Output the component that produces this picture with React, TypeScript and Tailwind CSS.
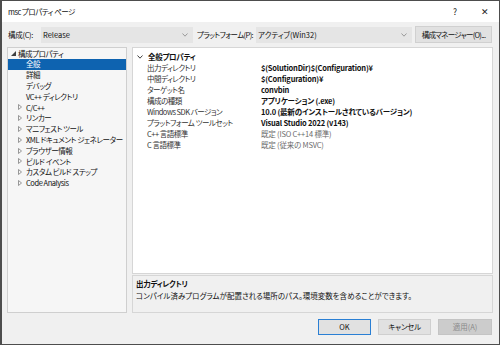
import React from 'react';

type TreeItem = { label: string; level: number; state?: 'open' | 'closed'; selected?: boolean };

const treeItems: TreeItem[] = [
    { label: '構成プロパティ', level: 0, state: 'open' },
    { label: '全般', level: 1, selected: true },
    { label: '詳細', level: 1 },
    { label: 'デバッグ', level: 1 },
    { label: 'VC++ ディレクトリ', level: 1 },
    { label: 'C/C++', level: 1, state: 'closed' },
    { label: 'リンカー', level: 1, state: 'closed' },
    { label: 'マニフェスト ツール', level: 1, state: 'closed' },
    { label: 'XML ドキュメント ジェネレーター', level: 1, state: 'closed' },
    { label: 'ブラウザー情報', level: 1, state: 'closed' },
    { label: 'ビルド イベント', level: 1, state: 'closed' },
    { label: 'カスタム ビルド ステップ', level: 1, state: 'closed' },
    { label: 'Code Analysis', level: 1, state: 'closed' },
];

const props = [
    { name: '出力ディレクトリ', value: '$(SolutionDir)$(Configuration)¥', bold: true },
    { name: '中間ディレクトリ', value: '$(Configuration)¥', bold: true },
    { name: 'ターゲット名', value: 'convbin', bold: true },
    { name: '構成の種類', value: 'アプリケーション (.exe)', bold: true },
    { name: 'Windows SDK バージョン', value: '10.0 (最新のインストールされているバージョン)', bold: true },
    { name: 'プラットフォーム ツールセット', value: 'Visual Studio 2022 (v143)', bold: true },
    { name: 'C++ 言語標準', value: '既定 (ISO C++14 標準)', bold: false },
    { name: 'C 言語標準', value: '既定 (従来の MSVC)', bold: false },
];

/* tiny tree arrows */
const OpenArrow = () => (
    <svg width="5" height="5" viewBox="0 0 5 5" className="shrink-0">
        <path d="M5 0 L5 5 L0 5 Z" fill="#404040" />
    </svg>
);
const ClosedArrow = () => (
    <svg width="4" height="6" viewBox="0 0 4 6" className="shrink-0">
        <path d="M0.5 0.5 L3.5 3 L0.5 5.5 Z" fill="none" stroke="#808080" strokeWidth="0.8" />
    </svg>
);
const Chevron = ({ color = '#9a9a9a' }: { color?: string }) => (
    <svg width="6" height="4" viewBox="0 0 6 4">
        <path d="M0.5 0.5 L3 3.2 L5.5 0.5" fill="none" stroke={color} strokeWidth="1" />
    </svg>
);

const Dropdown = ({ text, w }: { text: string; w: string }) => (
    <div className={`${w} h-[16px] shrink-0 bg-[#e5e5e5] flex items-center justify-between pl-[2px] pr-[5px]`}>
        <span>{text}</span>
        <Chevron />
    </div>
);

export default function App() {
    return (
        <div className="w-[500px] h-[345px] flex flex-col bg-[#f0f0f0] border border-[#4d4d4d] border-l-2 text-[7.5px] leading-none text-[#111] whitespace-nowrap font-['Noto_Sans_CJK_JP',sans-serif] [font-feature-settings:'palt'_1] overflow-hidden">
            {/* ---------- title bar ---------- */}
            <div className="h-[21px] shrink-0 bg-white flex items-center justify-between pl-[6px] pr-[10px]">
                <span className="text-[7.5px] tracking-[-0.5px]">msc プロパティ ページ</span>
                <div className="flex items-center gap-[24px] text-[8.5px] text-[#222]">
                    <span>?</span>
                    <span className="text-[9px]">✕</span>
                </div>
            </div>

            {/* ---------- configuration row ---------- */}
            <div className="h-[25px] shrink-0 flex items-center pl-[6px] pr-[7px]">
                <span className="w-[33px] shrink-0 tracking-[-0.3px]">構成(C):</span>
                <Dropdown text="Release" w="w-[152px]" />
                <span className="ml-[4px] w-[59px] shrink-0 tracking-[-0.6px]">プラットフォーム(P):</span>
                <Dropdown text="アクティブ(Win32)" w="w-[156px]" />
                <div className="ml-[3px] w-[77px] h-[17px] shrink-0 bg-[#e1e1e1] border border-[#d0d0d0] flex items-center justify-center tracking-[-0.7px]">
                    構成マネージャー(O)...
                </div>
            </div>

            {/* ---------- body ---------- */}
            <div className="flex gap-[5px] pl-[5px] pr-[6px] h-[267px] shrink-0">
                {/* tree */}
                <div className="w-[120px] h-[266px] shrink-0 border border-[#cfcfcf] bg-[#f6f6f6] overflow-hidden tracking-[-0.45px]">
                    {treeItems.map(({ label, level, state, selected }) => (
                        <div
                            key={label}
                            className={`h-[10.8px] flex items-center ${selected ? 'bg-[#0e63b0] text-white' : ''} ${level === 0 ? 'pl-[3px]' : 'pl-[10px]'}`}
                        >
                            <span className="w-[5px] shrink-0 flex items-center">
                                {state === 'open' && <OpenArrow />}
                                {state === 'closed' && <ClosedArrow />}
                            </span>
                            <span className={level === 0 ? 'ml-[2px]' : 'ml-[3px]'}>{label}</span>
                        </div>
                    ))}
                </div>

                {/* grid + description */}
                <div className="flex-1 flex flex-col">
                    <div className="h-[227px] bg-white border border-[#d6d6d6] pt-[3px]">
                        <div className="h-[11px] flex items-center pl-[4px] font-bold">
                            <span className="w-[11px]"><Chevron color="#404040" /></span>
                            <span className="tracking-[-0.3px]">全般プロパティ</span>
                        </div>
                        {props.map(({ name, value, bold }) => (
                            <div key={name} className="h-[11px] flex items-center">
                                <span className="w-[128px] shrink-0 pl-[14px] text-[#333] tracking-[-0.5px]">{name}</span>
                                <span className={bold ? 'font-bold text-[#111] tracking-[-0.2px]' : 'text-[#6a6a6a] tracking-[-0.2px]'}>{value}</span>
                            </div>
                        ))}
                    </div>
                    <div className="mt-[1px] h-[38px] border border-[#d6d6d6] px-[3px] pt-[4px] flex flex-col gap-[4px]">
                        <span className="font-bold tracking-[-0.3px]">出力ディレクトリ</span>
                        <span>コンパイル済みプログラムが配置される場所のパス。環境変数を含めることができます。</span>
                    </div>
                </div>
            </div>

            {/* ---------- buttons ---------- */}
            <div className="flex justify-end gap-[7px] pr-[7px] pt-[5px]">
                <button className="w-[53px] h-[16px] bg-[#e1e1e1] border border-[#2a7fd4] flex items-center justify-center">OK</button>
                <button className="w-[53px] h-[16px] bg-[#e1e1e1] border border-[#cfcfcf] flex items-center justify-center tracking-[-0.3px]">キャンセル</button>
                <button className="w-[54px] h-[16px] bg-[#cccccc] border border-[#c4c4c4] text-[#8a8a8a] flex items-center justify-center">適用(A)</button>
            </div>
        </div>
    );
}
